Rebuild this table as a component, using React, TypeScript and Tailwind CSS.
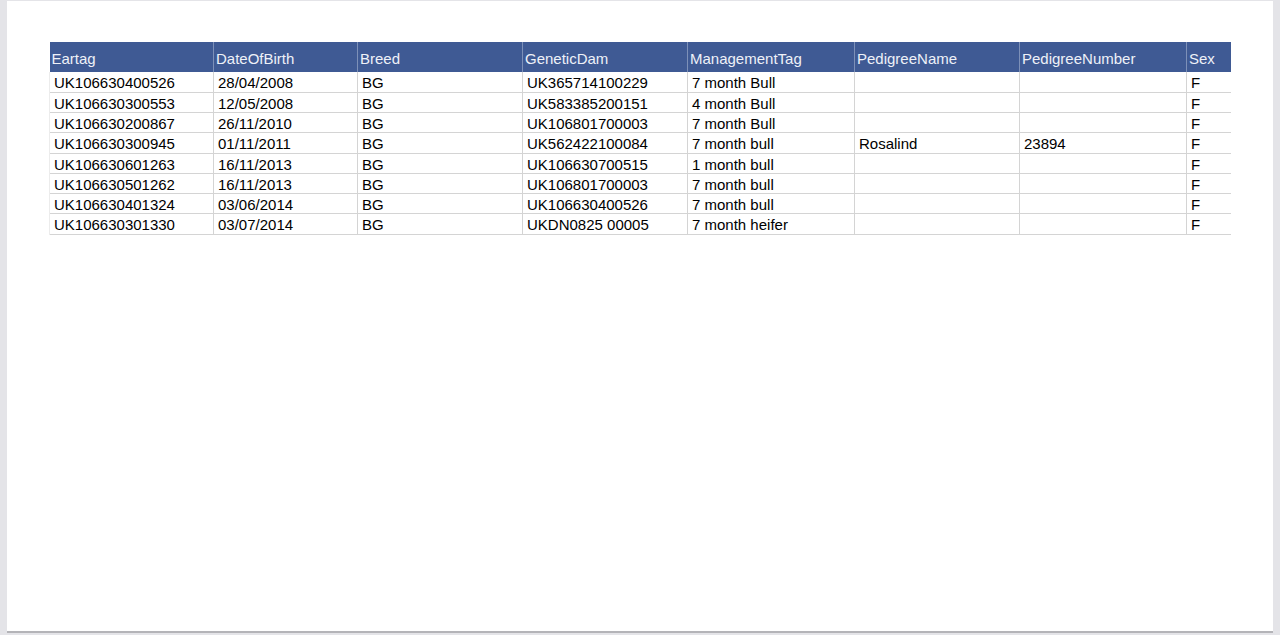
const columns = [
  { name: 'Eartag', w: 164 },
  { name: 'DateOfBirth', w: 144 },
  { name: 'Breed', w: 165 },
  { name: 'GeneticDam', w: 165 },
  { name: 'ManagementTag', w: 167 },
  { name: 'PedigreeName', w: 165 },
  { name: 'PedigreeNumber', w: 167 },
  { name: 'Sex', w: 44 },
];

const rows = [
  ['UK106630400526', '28/04/2008', 'BG', 'UK365714100229', '7 month Bull', '', '', 'F'],
  ['UK106630300553', '12/05/2008', 'BG', 'UK583385200151', '4 month Bull', '', '', 'F'],
  ['UK106630200867', '26/11/2010', 'BG', 'UK106801700003', '7 month Bull', '', '', 'F'],
  ['UK106630300945', '01/11/2011', 'BG', 'UK562422100084', '7 month bull', 'Rosalind', '23894', 'F'],
  ['UK106630601263', '16/11/2013', 'BG', 'UK106630700515', '1 month bull', '', '', 'F'],
  ['UK106630501262', '16/11/2013', 'BG', 'UK106801700003', '7 month bull', '', '', 'F'],
  ['UK106630401324', '03/06/2014', 'BG', 'UK106630400526', '7 month bull', '', '', 'F'],
  ['UK106630301330', '03/07/2014', 'BG', 'UKDN0825 00005', '7 month heifer', '', '', 'F'],
];

export default function App() {
  return (
    <div
      className="h-[635px] w-[1280px] bg-[#e4e4e8] pl-[7px] pr-[7px] pt-px"
      style={{ fontFamily: '"Liberation Sans", Arial, sans-serif' }}
    >
      <div className="h-[632px] bg-white pl-[42px] pt-[41px] border-b-2 border-[#b4b4b8]">
        <table className="border-collapse table-fixed w-[1181px] text-[15px]">
          <colgroup>
            {columns.map(c => <col key={c.name} style={{ width: c.w }} />)}
          </colgroup>
          <thead>
            <tr className="h-[30px] bg-[#3f5a94]">
              {columns.map((c, i) => (
                <th
                  key={c.name}
                  className={`text-left font-normal leading-[19px] text-[#eef1f8] pl-[2px] pt-[3px] align-middle ${i > 0 ? 'border-l border-[#7d90b8]' : ''}`}
                >
                  {c.name}
                </th>
              ))}
            </tr>
          </thead>
          <tbody>
            {rows.map((r, ri) => (
              <tr key={ri} className="border-b border-[#d4d4d4]">
                {r.map((v, ci) => (
                  <td
                    key={ci}
                    className={`h-[20.25px] pl-[4px] pt-[3px] pb-0 leading-[16px] text-black whitespace-nowrap align-top ${ci > 0 ? 'border-l border-[#d4d4d4]' : 'border-l border-[#ececec]'}`}
                  >
                    {v}
                  </td>
                ))}
              </tr>
            ))}
          </tbody>
        </table>
      </div>
    </div>
  );
}
